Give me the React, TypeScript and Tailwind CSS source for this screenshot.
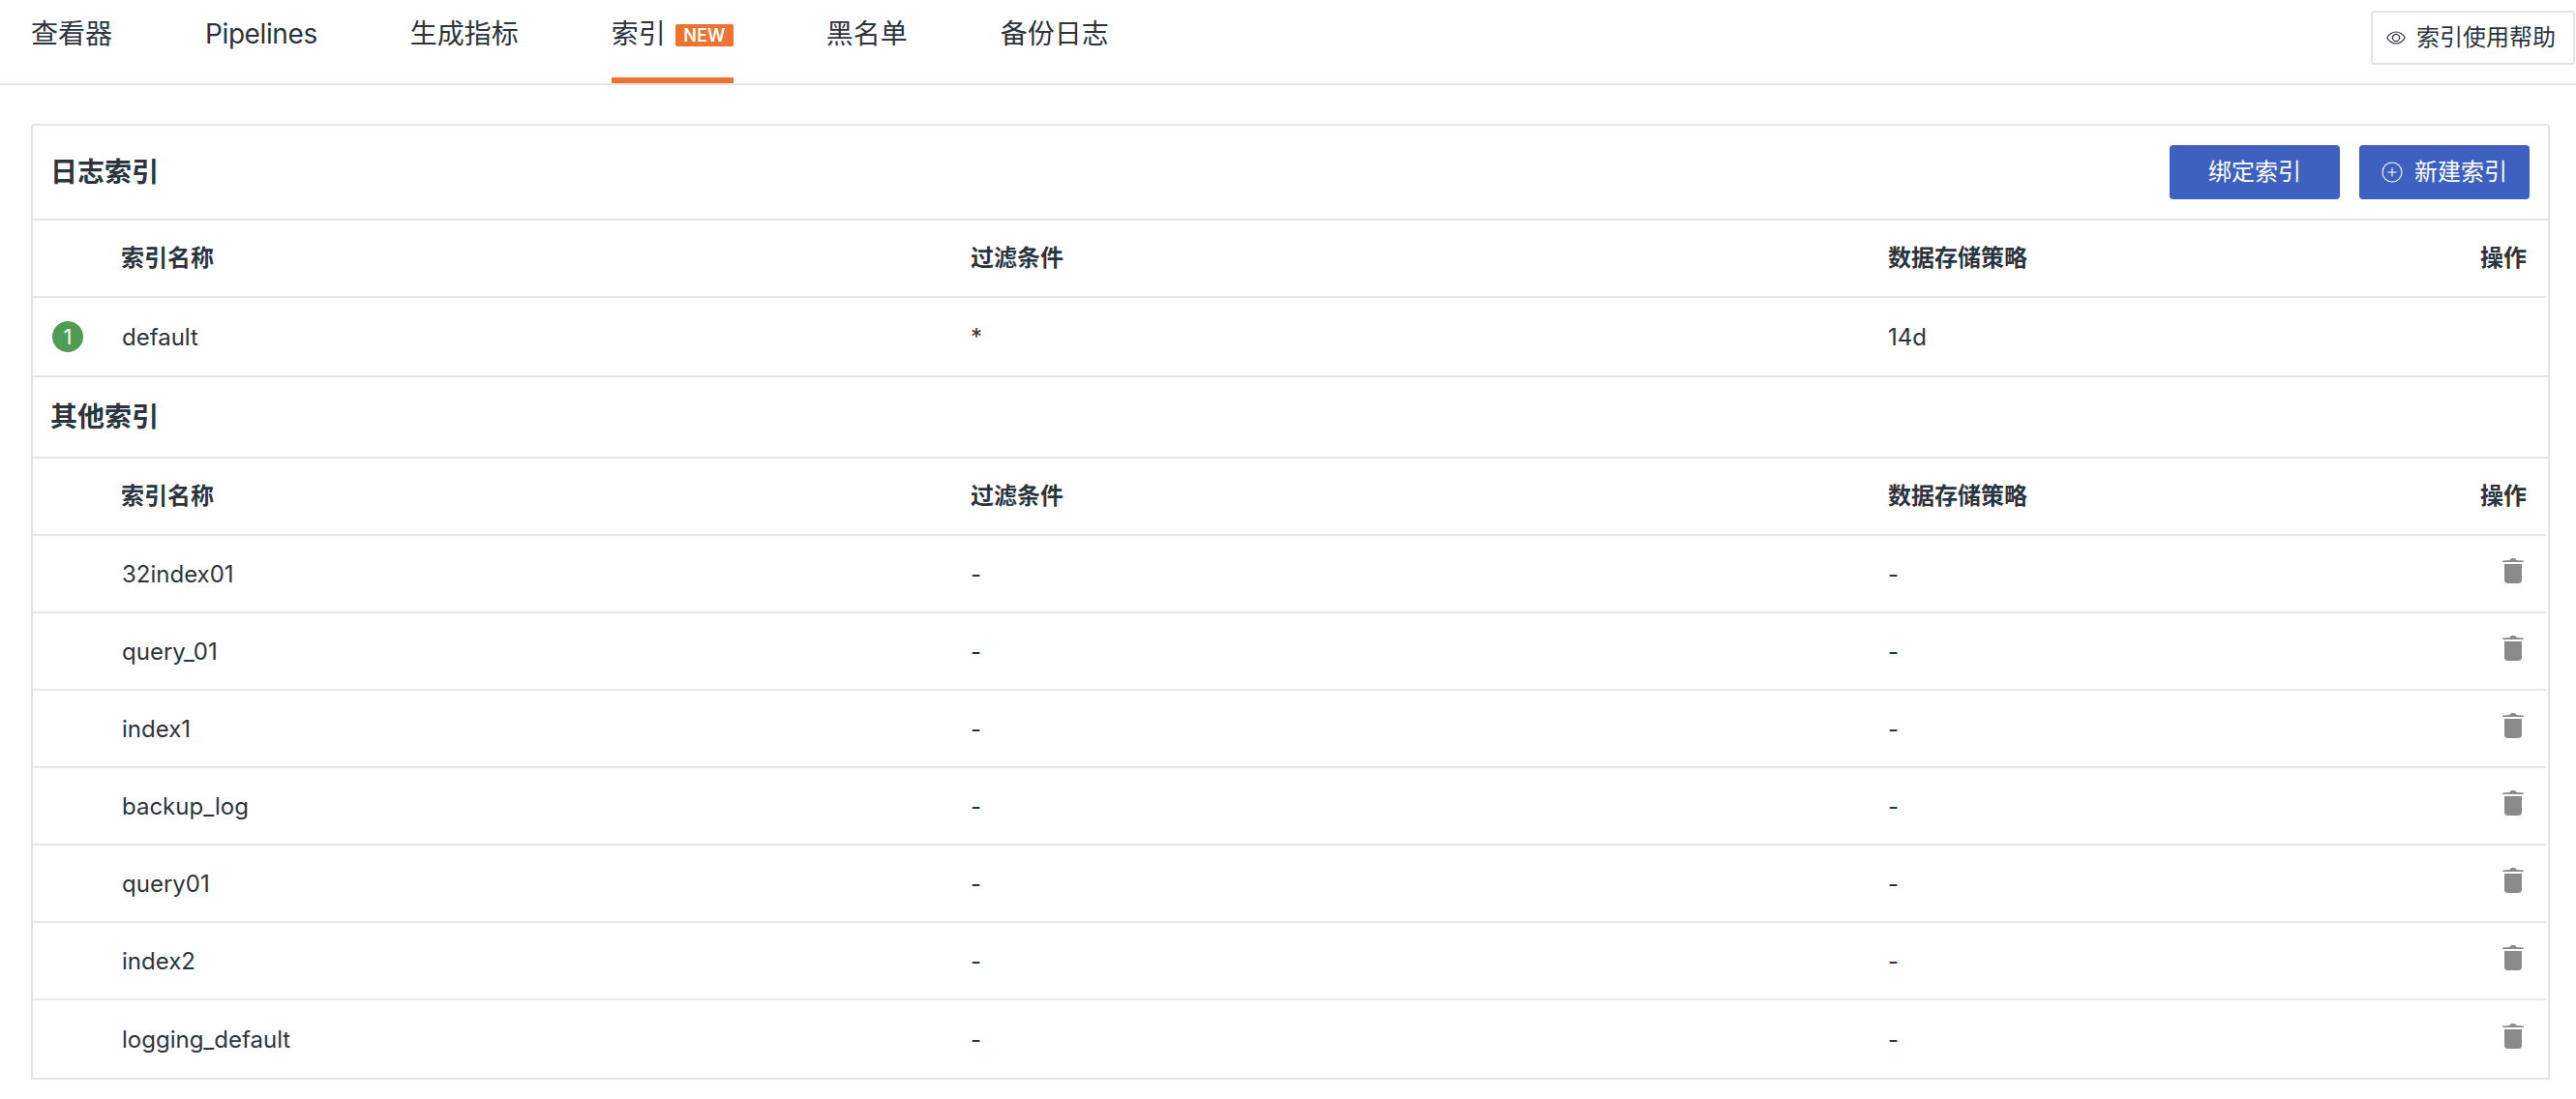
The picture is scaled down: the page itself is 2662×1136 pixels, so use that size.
import React from "react";

const FONT = 'font-[Inter,"Noto_Sans_CJK_SC",sans-serif]';

function TrashIcon() {
  return (
    <svg width="24" height="28" viewBox="0 0 24 28" fill="#8a8a8a" aria-hidden="true">
      <path d="M8.5 3 C9 1.5 10 1 12 1 C14 1 15 1.5 15.5 3 L22.5 3.6 C23 3.7 23 5 22.5 5 L1.5 5 C1 5 1 3.7 1.5 3.6 Z" />
      <path d="M3 7 L21 7 L21 23.5 C21 25.5 19.8 27 17.5 27 L6.5 27 C4.2 27 3 25.5 3 23.5 Z" />
    </svg>
  );
}

function EyeIcon() {
  return (
    <svg width="20" height="14" viewBox="0 0 20 14" fill="none" stroke="#2c3540" strokeWidth="1.2" aria-hidden="true">
      <path d="M0.8 7 C3 3 6 1 10 1 C14 1 17 3 19.2 7 C17 11 14 13 10 13 C6 13 3 11 0.8 7 Z" />
      <circle cx="10" cy="7" r="3.6" />
    </svg>
  );
}

function PlusCircleIcon() {
  return (
    <svg width="22" height="22" viewBox="0 0 22 22" fill="none" stroke="#ffffff" strokeWidth="1.1" aria-hidden="true">
      <circle cx="11" cy="11" r="10" />
      <path d="M11 6.5 V15.5 M6.5 11 H15.5" />
    </svg>
  );
}

const ROW = "mr-[2px] grid grid-cols-[91px_878px_948px_1fr_120px] items-center";

function HeadRow({ className }: { className: string }) {
  return (
    <div className={`${ROW} ${className} border-b-2 border-[#e8e8ea] text-[24px] font-semibold text-[#2b3540]`}>
      <div />
      <div>索引名称</div>
      <div>过滤条件</div>
      <div>数据存储策略</div>
      <div className="pr-[20px] text-right">操作</div>
    </div>
  );
}

const others = ["32index01", "query_01", "index1", "backup_log", "query01", "index2", "logging_default"];

export default function App() {
  return (
    <div className={`${FONT} h-[1136px] overflow-hidden bg-white text-[#2b3540]`}>
      <div className="flex h-[88px] items-start justify-between border-b-2 border-[#e3e4ea] pl-[32px] pr-px">
        <nav className="flex gap-24 text-[28px] leading-[70px]">
          <div className="h-[86px]">查看器</div>
          <div className="h-[86px] tracking-[-0.4px]">Pipelines</div>
          <div className="h-[86px]">生成指标</div>
          <div className="flex h-[86px] items-start gap-[10px] border-b-[6px] border-[#ee7230]">
            <span>索引</span>
            <span className="mt-[25px] flex h-[23px] w-[60px] items-center justify-center rounded-[2px] bg-[#ee7230] text-[18px] font-semibold leading-none text-white">
              NEW
            </span>
          </div>
          <div className="h-[86px]">黑名单</div>
          <div className="h-[86px]">备份日志</div>
        </nav>
        <button className="mt-[11px] flex h-[56px] w-[211px] items-center gap-[11px] rounded-[4px] border-2 border-[#e3e4ea] bg-white pl-[14px] text-[24px]">
          <EyeIcon />
          <span>索引使用帮助</span>
        </button>
      </div>

      <div className="ml-[32px] mr-[27px] mt-[40px] rounded-t-[3px] border-2 border-[#e3e4ea]">
        <div className="flex h-[98px] items-center justify-between border-b-2 border-[#e3e4ea] pl-[18px] pr-[19px]">
          <h2 className="text-[28px] font-semibold">日志索引</h2>
          <div className="flex gap-[20px]">
            <button className="flex h-[56px] w-[176px] items-center justify-center rounded-[4px] bg-[#3e60c1] text-[24px] text-white">
              绑定索引
            </button>
            <button className="flex h-[56px] w-[176px] items-center justify-center gap-[12px] rounded-[4px] bg-[#3e60c1] text-[24px] text-white">
              <PlusCircleIcon />
              <span>新建索引</span>
            </button>
          </div>
        </div>

        <HeadRow className="h-[80px]" />
        <div className="grid h-[82px] grid-cols-[91px_878px_948px_1fr_120px] items-center border-b-2 border-[#e3e4ea] text-[24px]">
          <div className="pl-[20px]">
            <span className="flex h-[32px] w-[32px] items-center justify-center rounded-full bg-[#4f9d54] text-[22px] leading-none text-white">
              1
            </span>
          </div>
          <div className="pl-[1px] pt-[2px]">default</div>
          <div className="pt-[2px]">*</div>
          <div className="pt-[2px]">14d</div>
          <div />
        </div>

        <div className="flex h-[84px] items-center border-b-2 border-[#e3e4ea] pl-[18px]">
          <h2 className="text-[28px] font-semibold">其他索引</h2>
        </div>

        <HeadRow className="h-[80px]" />
        {others.map((name, i) => (
          <div
            key={name}
            className={`${ROW} h-[80px] text-[24px] ${i < others.length - 1 ? "border-b-2 border-[#e8e8ea]" : ""}`}
          >
            <div />
            <div className="pl-[1px] pt-[2px]">{name}</div>
            <div className="pt-[2px]">-</div>
            <div className="pt-[2px]">-</div>
            <div className="flex justify-end pb-[6px] pr-[22px]">
              <TrashIcon />
            </div>
          </div>
        ))}
      </div>
    </div>
  );
}
